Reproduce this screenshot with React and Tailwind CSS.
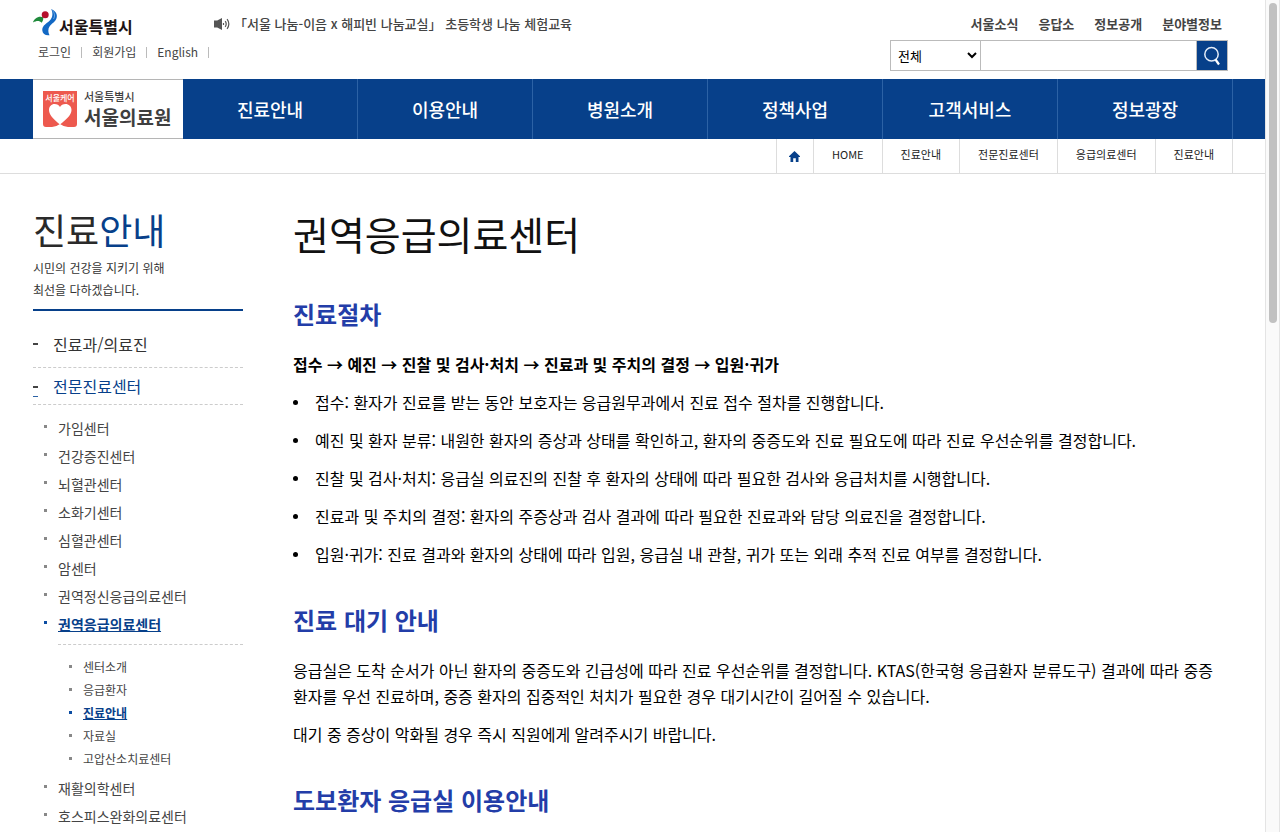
import { useState } from "react";

const UTILITY_LINKS = ["로그인", "회원가입", "English"];
const TOP_LINKS = ["서울소식", "응답소", "정보공개", "분야별정보"];
const NAV_ITEMS = ["진료안내", "이용안내", "병원소개", "정책사업", "고객서비스", "정보광장"];
const BREADCRUMBS = ["HOME", "진료안내", "전문진료센터", "응급의료센터", "진료안내"];

const CENTERS = [
  { name: "가임센터" },
  { name: "건강증진센터" },
  { name: "뇌혈관센터" },
  { name: "소화기센터" },
  { name: "심혈관센터" },
  { name: "암센터" },
  { name: "권역정신응급의료센터" },
  {
    name: "권역응급의료센터",
    active: true,
    pages: ["센터소개", "응급환자", "진료안내", "자료실", "고압산소치료센터"],
  },
  { name: "재활의학센터" },
  { name: "호스피스완화의료센터" },
];
const ACTIVE_PAGE = "진료안내";

const STEPS = [
  "접수: 환자가 진료를 받는 동안 보호자는 응급원무과에서 진료 접수 절차를 진행합니다.",
  "예진 및 환자 분류: 내원한 환자의 증상과 상태를 확인하고, 환자의 중증도와 진료 필요도에 따라 진료 우선순위를 결정합니다.",
  "진찰 및 검사·처치: 응급실 의료진의 진찰 후 환자의 상태에 따라 필요한 검사와 응급처치를 시행합니다.",
  "진료과 및 주치의 결정: 환자의 주증상과 검사 결과에 따라 필요한 진료과와 담당 의료진을 결정합니다.",
  "입원·귀가: 진료 결과와 환자의 상태에 따라 입원, 응급실 내 관찰, 귀가 또는 외래 추적 진료 여부를 결정합니다.",
];

const CityEmblem = () => (
  <svg className="h-[27px] w-[25px] shrink-0" viewBox="0 0 25 27" aria-hidden="true">
    <path d="M0 13.5C1.2 9.2 5.5 6.5 10.4 8.2Q10.6 11 8.8 13.8C6.3 11.4 3.6 11.6 0 13.5Z" fill="#1f8a3b" />
    <circle cx="12.2" cy="5.7" r="3.5" fill="#b5112c" />
    <path d="M18.2 0C22 1.5 24.8 5 23.6 9C22.6 12.5 18.8 14.5 16.7 17.2C14.8 19.8 15 23.5 16.5 26.2C12.5 26.8 9.6 24.8 9.3 21.5C9 17.5 12 15.3 15.2 13C19.2 10 20.7 5.5 18.2 0Z" fill="#1268c4" />
    <path d="M19.5 1.5C22 4.5 22 7.5 20.5 10" fill="none" stroke="#7fb2e8" strokeWidth="0.8" />
  </svg>
);

const SpeakerIcon = () => (
  <svg className="h-3 w-4 shrink-0" viewBox="0 0 16 12" aria-hidden="true">
    <path d="M0 2.5H3.2L8 0V12L3.2 9.5H0Z" fill="#555" />
    <path d="M9.5 5V7M11.2 3.2Q13.2 6 11.2 8.8M13.1 1.2Q16.6 6 13.1 10.8" fill="none" stroke="#555" strokeWidth="1.2" />
  </svg>
);

const HospitalLogo = () => (
  <a
    href="#home"
    className="flex w-[150px] shrink-0 items-center gap-[7px] border-y border-[#b5b5b5] bg-white pl-[10px]"
  >
    <span className="relative block h-[36px] w-[34px] shrink-0">
      <svg className="h-full w-full" viewBox="0 0 34 36" aria-hidden="true">
        <path d="M0 0H34V33Q34 36 31 36H25Q21 36 17 33Q13 36 9 36H3Q0 36 0 33Z" fill="#ed594e" />
        <path d="M17 33.5C12 29.5 6 24.5 6 19C6 15.5 8.5 13 11.5 13C14 13 16 14.2 17 16C18 14.2 20 13 22.5 13C25.8 13 28.5 15.5 28.5 19C28.5 24.5 22 29.5 17 33.5Z" fill="#fff" />
      </svg>
      <span className="absolute inset-x-0 top-0 text-center text-[8px] leading-[13px] font-medium whitespace-nowrap text-white">
        서울케어
      </span>
    </span>
    <span className="flex flex-col whitespace-nowrap text-[#3f3f3f]">
      <span className="text-[11px] leading-4 font-medium">서울특별시</span>
      <span className="text-[19px] leading-[26px] font-bold">서울의료원</span>
    </span>
  </a>
);

const HomeIcon = () => (
  <svg className="h-[11px] w-[11px]" viewBox="0 0 11 11" aria-hidden="true">
    <path d="M5.5 0L11 5.2V6H9.5V11H6.8V7.2H4.2V11H1.5V6H0V5.2Z" fill="#07408a" />
  </svg>
);

const SearchForm = () => {
  const [category, setCategory] = useState("전체");
  const [keyword, setKeyword] = useState("");

  return (
    <form className="flex h-[31px]" onSubmit={(e) => e.preventDefault()}>
      <select
        aria-label="검색 분류"
        value={category}
        onChange={(e) => setCategory(e.target.value)}
        className="w-[91px] border border-[#bbb] bg-white pl-[3px] text-[13px] text-black"
      >
        <option>전체</option>
      </select>
      <input
        type="text"
        aria-label="검색어"
        value={keyword}
        onChange={(e) => setKeyword(e.target.value)}
        className="w-[215px] border-y border-[#bbb] bg-white px-2 text-[13px] outline-none"
      />
      <button
        type="submit"
        aria-label="검색"
        className="flex w-8 items-center justify-center border border-[#bbb] bg-[#07408a]"
      >
        <svg className="h-[20px] w-[18px]" viewBox="0 0 18 20" aria-hidden="true">
          <circle cx="8.5" cy="8.3" r="6.7" fill="none" stroke="#e3ecf8" strokeWidth="1.5" />
          <path d="M12.5 13.5L16 18.5" stroke="#fff" strokeWidth="2.2" />
        </svg>
      </button>
    </form>
  );
};

const Header = () => (
  <header>
    <div className="flex h-[79px] pr-8 pl-[33px]">
      <div className="w-[181px] shrink-0 pt-[9px] whitespace-nowrap">
        <a href="#seoul" className="flex h-[27px] items-center gap-px">
          <CityEmblem />
          <span className="pt-[6px] text-[16px] leading-6 font-bold text-[#1c1415]">서울특별시</span>
        </a>
        <ul className="flex h-8 items-center pl-[5px] text-[12px] text-[#444]">
          {UTILITY_LINKS.map((label) => (
            <li key={label} className="mr-[10px] flex items-center gap-[10px]">
              <a href="#util">{label}</a>
              <span className="h-[11px] w-px bg-[#bbb]" />
            </li>
          ))}
        </ul>
      </div>
      <a
        href="#notice"
        className="mt-3 flex h-6 items-center gap-1 text-[13px] font-medium whitespace-nowrap text-[#444]"
      >
        <SpeakerIcon />
        「서울 나눔-이음 x 해피빈 나눔교실」 초등학생 나눔 체험교육
      </a>
      <div className="ml-auto flex flex-col items-end pr-[5px]">
        <ul className="flex h-10 items-center gap-5 pt-2 pr-[6px] text-[13px] font-bold whitespace-nowrap text-[#444]">
          {TOP_LINKS.map((label) => (
            <li key={label}>
              <a href="#top">{label}</a>
            </li>
          ))}
        </ul>
        <SearchForm />
      </div>
    </div>

    <div className="bg-[#07408a] pr-8 pl-[33px]">
      <nav className="flex h-[60px]">
        <HospitalLogo />
        <ul className="flex flex-1">
          {NAV_ITEMS.map((label) => (
            <li key={label} className="flex-1 border-r border-[#2c62a5]">
              <a
                href="#menu"
                className="flex h-full items-center justify-center text-[18px] font-medium text-white"
              >
                {label}
              </a>
            </li>
          ))}
        </ul>
      </nav>
    </div>

    <div className="border-b border-[#ddd] pr-8 pl-[33px]">
      <ol className="flex h-[34px] justify-end text-[11px] leading-[30px] text-[#222]">
        <li className="border-x border-[#ddd]">
          <a href="#home" aria-label="홈" className="flex h-full w-9 items-center justify-center">
            <HomeIcon />
          </a>
        </li>
        {BREADCRUMBS.map((label, i) => (
          <li key={i} className="border-r border-[#ddd] px-[18px]">
            <a href="#crumb">{label}</a>
          </li>
        ))}
      </ol>
    </div>
  </header>
);

const CenterItem = ({ center }) => (
  <li>
    <a
      href="#center"
      className={`flex h-7 items-center gap-[11px] pl-[11px] text-[14px] ${
        center.active ? "font-bold text-[#07408a] underline" : "text-[#444]"
      }`}
    >
      <span className={`mb-1 h-[3px] w-[3px] ${center.active ? "bg-[#0b4da2]" : "bg-[#888]"}`} />
      {center.name}
    </a>
    {center.pages && (
      <ul className="mt-[6px] ml-[25px] border-t border-dashed border-[#ccc] pt-[10px] pb-1 text-[12px]">
        {center.pages.map((page) => (
          <li key={page}>
            <a
              href="#page"
              className={`flex h-[23px] items-center gap-[11px] pl-[11px] ${
                page === ACTIVE_PAGE ? "font-bold text-[#07408a] underline" : "text-[#444]"
              }`}
            >
              <span className={`h-[3px] w-[3px] ${page === ACTIVE_PAGE ? "bg-[#0b4da2]" : "bg-[#888]"}`} />
              {page}
            </a>
          </li>
        ))}
      </ul>
    )}
  </li>
);

const Sidebar = () => (
  <aside className="w-[210px] shrink-0 pt-[29px]">
    <div className="border-b-2 border-[#07408a] pb-2">
      <h2 className="mb-[2px] text-[36px] leading-[52px] text-[#2a2a2a]">
        진료<span className="text-[#07408a]">안내</span>
      </h2>
      <p className="text-[12px] leading-[22px] text-[#333]">
        시민의 건강을 지키기 위해
        <br />
        최선을 다하겠습니다.
      </p>
    </div>
    <ul className="pt-3 text-[16px]">
      <li className="border-b border-dashed border-[#ccc] pb-[2px]">
        <a href="#depts" className="flex h-[42px] items-center gap-[15px] text-[#333]">
          <span className="h-[2px] w-[5px] bg-[#444]" />
          진료과/의료진
        </a>
      </li>
      <li>
        <a
          href="#centers"
          className="flex h-[37px] items-center gap-[15px] border-b border-dashed border-[#ccc] text-[#07408a]"
        >
          <span className="mt-[10px] h-[11px] w-[5px] border-t-2 border-b border-t-[#444] border-b-[#2c62a5]" />
          전문진료센터
        </a>
        <ul className="pt-[9px] pb-5">
          {CENTERS.map((center) => (
            <CenterItem key={center.name} center={center} />
          ))}
        </ul>
      </li>
    </ul>
  </aside>
);

const SectionTitle = ({ children }) => (
  <h2 className="mt-[35px] mb-[19px] text-[24px] leading-9 font-bold text-[#233da8]">{children}</h2>
);

const Content = () => (
  <main className="min-w-0 flex-1 pt-8 pb-10 text-[16px] leading-[26px] text-black">
    <h1 className="text-[39px] leading-[55px] text-[#111]">권역응급의료센터</h1>

    <SectionTitle>진료절차</SectionTitle>
    <p className="font-bold">접수 → 예진 → 진찰 및 검사·처치 → 진료과 및 주치의 결정 → 입원·귀가</p>
    <ul className="mt-3 space-y-3">
      {STEPS.map((step) => (
        <li key={step} className="flex items-center gap-[17px]">
          <span className="h-[5px] w-[5px] shrink-0 rounded-full bg-black" />
          <span>{step}</span>
        </li>
      ))}
    </ul>

    <SectionTitle>진료 대기 안내</SectionTitle>
    <p className="break-keep">
      응급실은 도착 순서가 아닌 환자의 중증도와 긴급성에 따라 진료 우선순위를 결정합니다. KTAS(한국형
      응급환자 분류도구) 결과에 따라 중증 환자를 우선 진료하며, 중증 환자의 집중적인 처치가 필요한 경우
      대기시간이 길어질 수 있습니다.
    </p>
    <p className="mt-3">대기 중 증상이 악화될 경우 즉시 직원에게 알려주시기 바랍니다.</p>

    <SectionTitle>도보환자 응급실 이용안내</SectionTitle>
  </main>
);

const App = () => (
  <div
    lang="ko"
    className="flex h-screen bg-white font-['Noto_Sans_CJK_KR','Noto_Sans',sans-serif]"
  >
    <div className="min-w-0 flex-1 overflow-y-auto [scrollbar-width:none]">
      <Header />
      <div className="flex gap-[50px] pr-8 pl-[33px]">
        <Sidebar />
        <Content />
      </div>
    </div>
    <div className="w-[15px] shrink-0 border-x border-[#e4e4e4] bg-[#fafafa] px-[3px] pt-[3px]">
      <div className="h-[320px] w-2 rounded-full bg-[#c1c1c1]" />
    </div>
  </div>
);

export default App;
